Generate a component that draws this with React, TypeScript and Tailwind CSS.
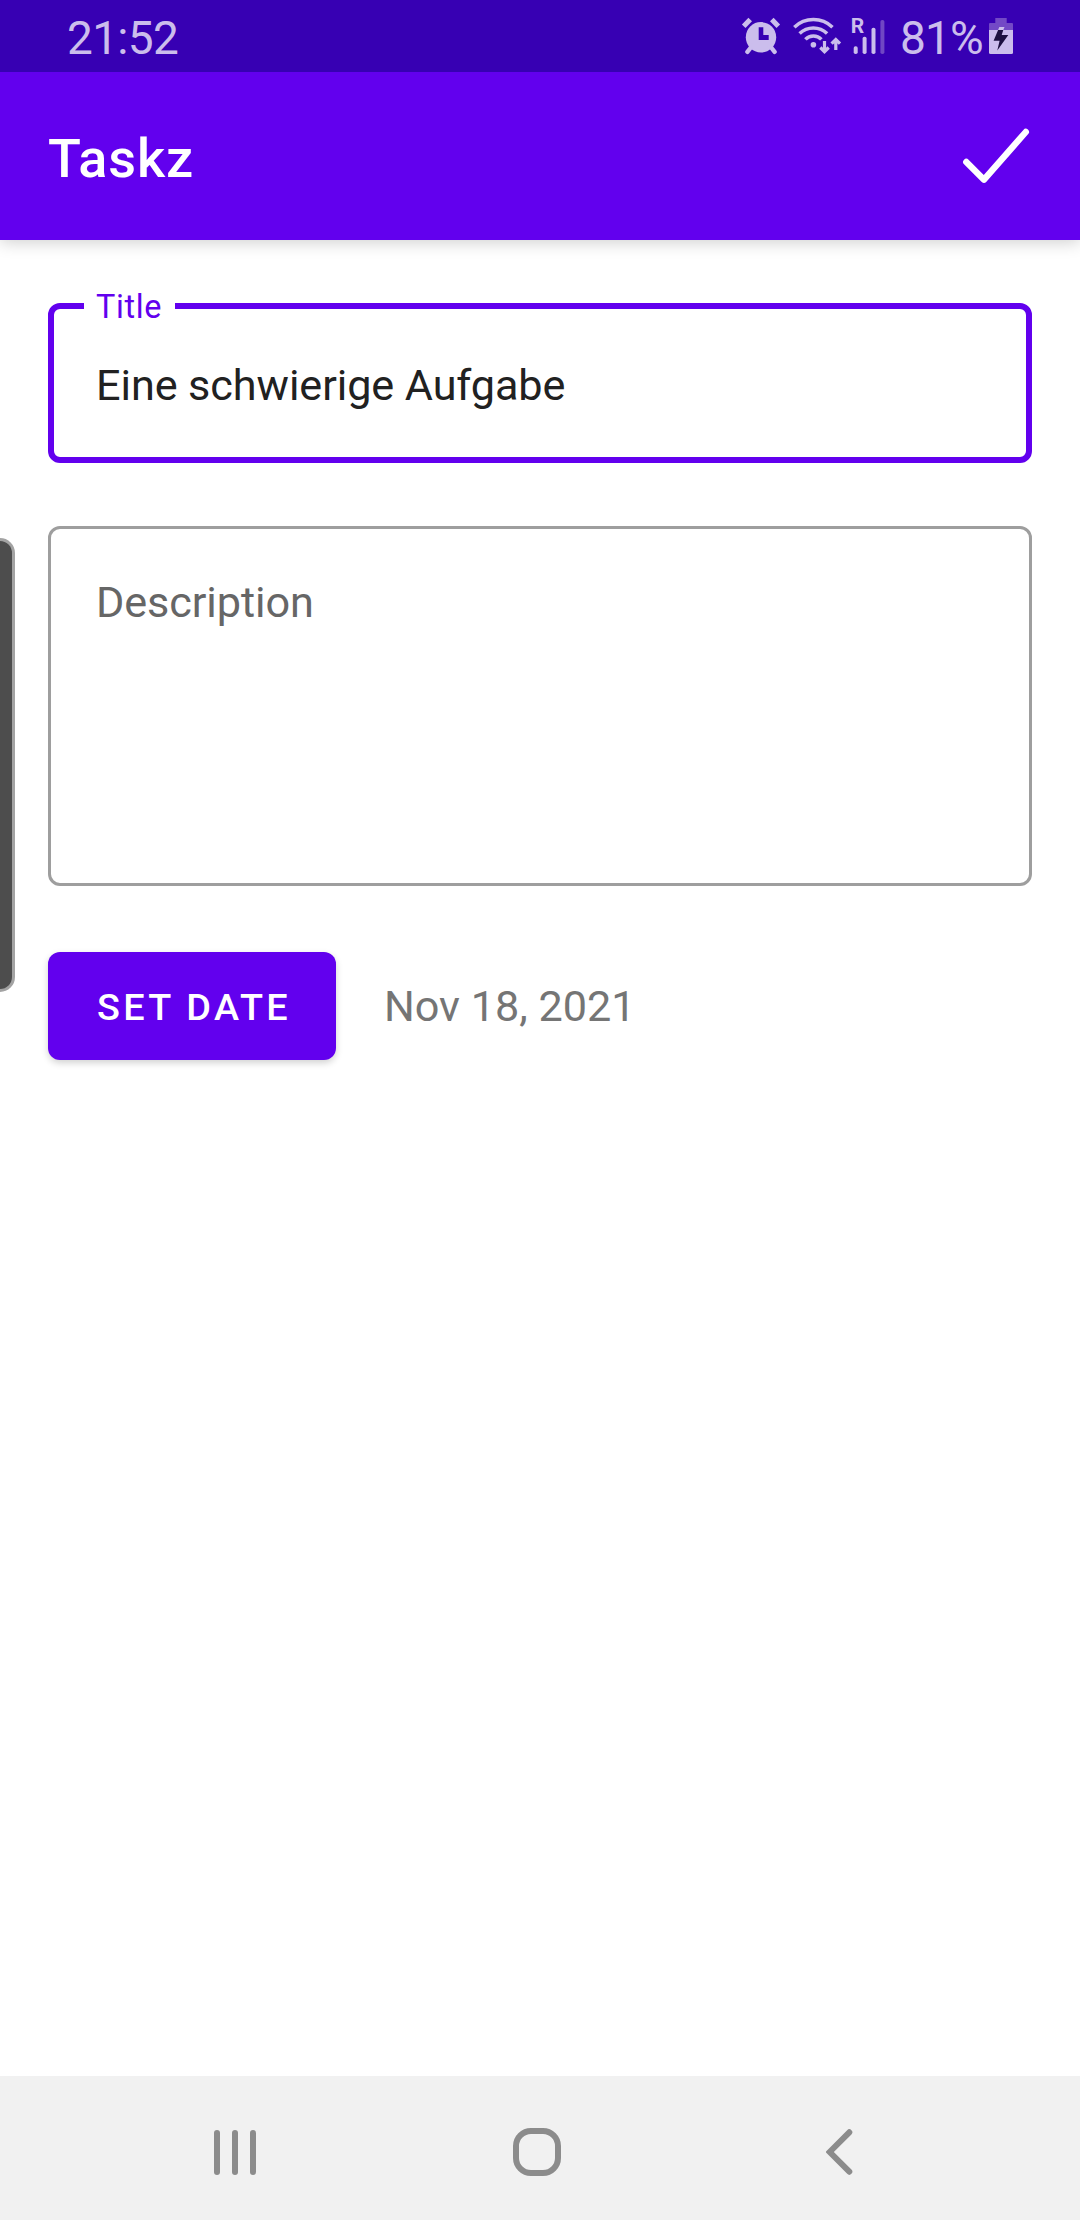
import React from "react";

function AlarmIcon() {
  return (
    <svg width="44" height="72" viewBox="740 0 44 72" fill="none" stroke="#cbbdec">
      <circle cx="761" cy="37.3" r="15.2" fill="#cbbdec" stroke="none" />
      <path d="M758.7 27.3h4.6v7.7h5.4v5h-10z" fill="#3700b3" stroke="none" />
      <path d="M743.7 26.2L750.2 19.5M778.3 26.2L771.8 19.5" strokeWidth="5" />
      <path d="M747.4 51.8L752 46M774.6 51.8L770 46" strokeWidth="4.4" strokeLinecap="round" />
    </svg>
  );
}

function WifiIcon() {
  return (
    <svg width="50" height="72" viewBox="792 0 50 72" fill="none" stroke="#cbbdec" strokeWidth="3.5">
      <path d="M794.3 27.2A27.7 27.7 0 0 1 832.5 27.2" />
      <path d="M799.6 33.5A19.8 19.8 0 0 1 827.1 33.5" />
      <path d="M805.4 39.4A11 11 0 0 1 821.4 39.4" />
      <circle cx="813.4" cy="44.7" r="2.8" fill="#cbbdec" stroke="none" />
      <path d="M824.5 41V51.5M820.3 47.5L824.5 51.7L828.7 47.5" strokeWidth="3.2" />
      <path d="M835.8 50V39.5M831.6 43.7L835.8 39.5L840 43.7" strokeWidth="3.2" />
    </svg>
  );
}

function SignalIcon() {
  return (
    <svg width="34" height="72" viewBox="851 0 34 72" fill="#cbbdec">
      <text x="850.8" y="32.8" fontFamily="Roboto, sans-serif" fontWeight="700" fontSize="21">
        R
      </text>
      <rect x="853.7" y="46.3" width="4" height="7.7" rx="1.8" />
      <rect x="862.6" y="36.8" width="4" height="17.2" rx="1.8" />
      <rect x="871.5" y="27.8" width="4" height="26.2" rx="1.8" />
      <rect x="880.4" y="20" width="4" height="34" rx="1.8" fill="#7047c4" />
    </svg>
  );
}

function BatteryIcon() {
  return (
    <svg width="24" height="72" viewBox="989 0 24 72">
      <path d="M995.3 18h11.4v5h5.3q1 0 1 1v6h-24v-6q0-1 1-1h5.3z" fill="#7349c6" />
      <path d="M989 30h24v22.5q0 1.5-1.5 1.5h-21q-1.5 0-1.5-1.5z" fill="#cbbdec" />
      <path d="M999.3 27h5.2l-1.2 3h-5.2z" fill="#cbbdec" />
      <path d="M998.1 30h5.2l-1.6 5h6.6L997.3 50.5l2.3-9.8h-6z" fill="#1d1040" />
    </svg>
  );
}

function StatusBar() {
  return (
    <div className="relative z-10 flex h-[72px] items-center justify-between bg-[#3700b3] px-[67px] text-[46px] text-[#cbbdec]">
      <span className="pt-[3px] leading-[72px] tracking-[-0.7px]">21:52</span>
      <div className="flex h-[72px] items-center">
        <AlarmIcon />
        <div className="ml-2 flex">
          <WifiIcon />
        </div>
        <div className="ml-[9px] flex">
          <SignalIcon />
        </div>
        <span className="ml-[15px] w-[89px] pt-[3px] leading-[72px] tracking-[-0.9px]">81%</span>
        <BatteryIcon />
      </div>
    </div>
  );
}

function AppBar() {
  return (
    <header className="flex h-[168px] items-center justify-between bg-[#6200ee] px-12 shadow-[0_2px_16px_rgba(0,0,0,0.2)]">
      <h1 className="pt-[5px] text-[54px] font-medium leading-[64px] tracking-[0.9px] text-white">Taskz</h1>
      <svg
        width="72"
        height="72"
        viewBox="960 120 72 72"
        fill="none"
        stroke="#fff"
        strokeWidth="6.4"
        strokeLinecap="round"
        strokeLinejoin="round"
      >
        <path d="M966.3 162L984 179.7L1025.8 132" />
      </svg>
    </header>
  );
}

function NavBar() {
  return (
    <nav className="flex h-36 items-center bg-[#f1f1f1] pl-[214px] pt-2">
      <div className="flex gap-3">
        <div className="h-[45px] w-1.5 rounded-full bg-[#8c8c8c]" />
        <div className="h-[45px] w-1.5 rounded-full bg-[#8c8c8c]" />
        <div className="h-[45px] w-1.5 rounded-full bg-[#8c8c8c]" />
      </div>
      <div className="ml-[257px] h-12 w-12 rounded-[18px] border-[6px] border-[#8c8c8c]" />
      <svg
        className="ml-[265px]"
        width="27"
        height="48"
        viewBox="826 2128 27 48"
        fill="none"
        stroke="#8c8c8c"
        strokeWidth="6"
        strokeLinecap="round"
      >
        <path d="M849.3 2132.3L829.7 2152L849.3 2171.7" />
      </svg>
    </nav>
  );
}

export default function App() {
  return (
    <div className="relative flex h-[2220px] w-[1080px] flex-col overflow-hidden bg-white font-[Roboto,sans-serif]">
      <StatusBar />
      <AppBar />
      <main className="flex flex-1 flex-col px-12 pt-[63px]">
        <div className="relative flex h-40 items-center rounded-xl border-[6px] border-[#6200ee] px-[42px]">
          <span className="absolute -top-[24px] left-[30px] w-[91px] bg-white pl-3 text-[32.4px] leading-[44px] tracking-[0.02em] text-[#6200ee]">
            Title
          </span>
          <span className="pt-[6px] text-[43.2px] leading-[52px] tracking-[-0.08px] text-[#212121]">
            Eine schwierige Aufgabe
          </span>
        </div>
        <div className="mt-[63px] h-[360px] rounded-xl border-[3px] border-[#9e9e9e] px-[45px] pt-[48px]">
          <span className="block text-[43.2px] leading-[52px] tracking-[-0.08px] text-[#666]">Description</span>
        </div>
        <div className="mt-[66px] flex items-center">
          <button className="h-[108px] w-72 rounded-xl bg-[#6200ee] pl-[4px] pt-[3px] text-[37.8px] font-medium tracking-[0.087em] text-white shadow-[0_3px_7px_rgba(0,0,0,0.18)]">
            SET DATE
          </button>
          <span className="ml-12 pt-[2px] text-[43.2px] leading-[52px] text-[#757575]">Nov 18, 2021</span>
        </div>
      </main>
      <NavBar />
      <div className="absolute left-0 top-[538px] h-[454px] w-[15px] rounded-r-[15px] border-y-[3px] border-r-[3px] border-[#a3a3a3] bg-[#4d4d4d]" />
    </div>
  );
}
